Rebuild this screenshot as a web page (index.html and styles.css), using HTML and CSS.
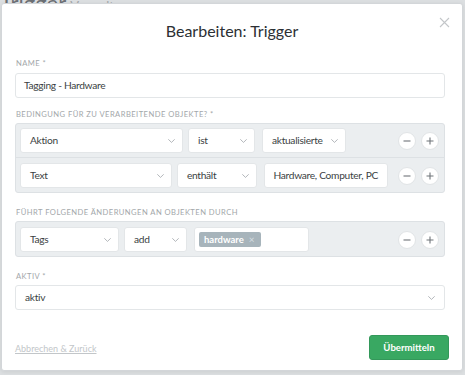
FILE: index.html
```html
<!DOCTYPE html>
<html lang="de">
<head>
<meta charset="utf-8">
<link rel="stylesheet" href="styles.css">
</head>
<body>
<div class="page-bg">
  <span class="page-title">Trigger</span> <span class="page-sub">Verwaltung</span>
</div>
<div class="modal">
  <div class="modal-head">
    <h1 class="modal-title">Bearbeiten: Trigger</h1>
    <span class="close">
      <svg width="11" height="11" viewBox="0 0 11 11"><path d="M1 1L10 10M10 1L1 10" stroke="#c3c6c9" stroke-width="1.1" fill="none"/></svg>
    </span>
  </div>
  <div class="modal-body">
    <div class="group g-name">
      <div class="label">Name *</div>
      <div class="control input">Tagging - Hardware</div>
    </div>
    <div class="group g-cond">
      <div class="label">Bedingung für zu verarbeitende Objekte? *</div>
      <div class="box">
        <div class="row">
          <div class="control select w-aktion">Aktion<svg class="chev" viewBox="0 0 7 4"><path d="M0.3 0.3L3.5 3.4L6.7 0.3"/></svg></div>
          <div class="control select w-ist">ist<svg class="chev" viewBox="0 0 7 4"><path d="M0.3 0.3L3.5 3.4L6.7 0.3"/></svg></div>
          <div class="control select w-akt">aktualisierte<svg class="chev" viewBox="0 0 7 4"><path d="M0.3 0.3L3.5 3.4L6.7 0.3"/></svg></div>
          <div class="spacer"></div>
          <span class="circ"><svg viewBox="0 0 8 8"><path d="M0.5 4H7.5"/></svg></span>
          <span class="circ"><svg viewBox="0 0 8 8"><path d="M0.5 4H7.5M4 0.5V7.5"/></svg></span>
        </div>
        <div class="row">
          <div class="control select w-text">Text<svg class="chev" viewBox="0 0 7 4"><path d="M0.3 0.3L3.5 3.4L6.7 0.3"/></svg></div>
          <div class="control select w-enth">enthält<svg class="chev" viewBox="0 0 7 4"><path d="M0.3 0.3L3.5 3.4L6.7 0.3"/></svg></div>
          <div class="control input w-hw">Hardware, Computer, PC</div>
          <div class="spacer"></div>
          <span class="circ"><svg viewBox="0 0 8 8"><path d="M0.5 4H7.5"/></svg></span>
          <span class="circ"><svg viewBox="0 0 8 8"><path d="M0.5 4H7.5M4 0.5V7.5"/></svg></span>
        </div>
      </div>
    </div>
    <div class="group g-act">
      <div class="label">Führt folgende Änderungen an Objekten durch</div>
      <div class="box">
        <div class="row row-act">
          <div class="control select w-tags">Tags<svg class="chev" viewBox="0 0 7 4"><path d="M0.3 0.3L3.5 3.4L6.7 0.3"/></svg></div>
          <div class="control select w-add">add<svg class="chev" viewBox="0 0 7 4"><path d="M0.3 0.3L3.5 3.4L6.7 0.3"/></svg></div>
          <div class="control tokens"><span class="token">hardware<span class="tx">×</span></span></div>
          <div class="spacer"></div>
          <span class="circ"><svg viewBox="0 0 8 8"><path d="M0.5 4H7.5"/></svg></span>
          <span class="circ"><svg viewBox="0 0 8 8"><path d="M0.5 4H7.5M4 0.5V7.5"/></svg></span>
        </div>
      </div>
    </div>
    <div class="group g-aktiv">
      <div class="label">Aktiv *</div>
      <div class="control select sel-aktiv">aktiv<svg class="chev" viewBox="0 0 7 4"><path d="M0.3 0.3L3.5 3.4L6.7 0.3"/></svg></div>
    </div>
  </div>
  <div class="modal-foot">
    <a class="cancel" href="#">Abbrechen &amp; Zurück</a>
    <button class="submit">Übermitteln</button>
  </div>
</div>
</body>
</html>
```

FILE: styles.css
```css
* { box-sizing: border-box; }
html, body { margin: 0; padding: 0; }
body {
  width: 465px;
  height: 375px;
  overflow: hidden;
  background: #dcdfe1;
  font-family: "Lato", "Open Sans", sans-serif;
  color: #3f4347;
  position: relative;
}
.page-bg {
  height: 4px;
  overflow: hidden;
  line-height: 10px;
  white-space: nowrap;
}
.page-title {
  display: inline-block;
  font-size: 22px;
  color: #6c7075;
  margin-top: -16px;
}
.page-sub {
  display: inline-block;
  font-size: 13px;
  color: #a4a8ab;
}
.modal {
  position: absolute;
  left: 1px;
  top: 3px;
  width: 462px;
  height: 368px;
  background: #fff;
  border: 1px solid #d3d6d9;
  border-radius: 3px;
  box-shadow: 0 1px 4px rgba(0,0,0,0.08);
}
.modal-head {
  position: relative;
  padding-top: 16px;
  text-align: center;
}
.modal-title {
  margin: 0;
  font-size: 16px;
  line-height: 22px;
  font-weight: 400;
  color: #2c3034;
}
.close {
  position: absolute;
  right: 12px;
  top: 13px;
  display: block;
  line-height: 0;
}
.modal-body {
  padding: 15px 17px 0 13px;
}
.g-name { margin-bottom: 10px; }
.g-cond { margin-bottom: 13px; }
.g-act { margin-bottom: 13px; }
.label {
  font-size: 7.6px;
  line-height: 12px;
  text-transform: uppercase;
  letter-spacing: 0.45px;
  color: #a3a7aa;
  margin-bottom: 3px;
  padding-left: 1px;
}
.g-name .label { margin-bottom: 4px; }
.control {
  position: relative;
  height: 25px;
  background: #fff;
  border: 1px solid #e3e6e8;
  border-radius: 3px;
  font-size: 10.2px;
  letter-spacing: -0.3px;
  line-height: 23px;
  color: #3b3f43;
  padding: 0 9px;
  white-space: nowrap;
}
.input { padding-left: 8px; }
.chev {
  position: absolute;
  right: 7px;
  top: 10px;
  width: 7px;
  height: 4px;
  fill: none;
  stroke: #a0a5a9;
  stroke-width: 0.8;
}
.sel-aktiv .chev { right: 9px; }
.box {
  background: #ebeef0;
  border: 1px solid #dde1e4;
  border-radius: 3px;
}
.row {
  display: flex;
  align-items: center;
  gap: 5px;
  padding: 4px 5px 4px 4px;
}
.row + .row {
  border-top: 1px solid #dde1e4;
  padding-top: 5px;
}
.row-act { padding-top: 5px; }
.spacer { flex: 1; }
.w-aktion { width: 163px; }
.w-ist { width: 67px; }
.w-akt { width: 84px; padding-right: 18px; margin-left: 2px; }
.w-text { width: 153px; }
.w-enth { width: 81px; }
.w-hw { width: 124px; margin-left: 2px; }
.w-tags { width: 99px; }
.w-add { width: 63px; }
.tokens { width: 115px; margin-left: 2px; padding: 0 4px; display: flex; align-items: center; }
.token {
  display: inline-flex;
  align-items: center;
  height: 15px;
  line-height: 15px;
  padding: 0 0 0 5px;
  background: #a7b4bb;
  color: #fff;
  border-radius: 2px;
  font-size: 9.5px;
  font-weight: 700;
  letter-spacing: 0;
  width: 62px;
}
.tx { font-weight: 400; color: #d5dde1; margin-left: 5px; font-size: 10px; }
.circ {
  display: flex;
  align-items: center;
  justify-content: center;
  width: 18px;
  height: 18px;
  border-radius: 50%;
  background: #fff;
  border: 1px solid #e1e4e6;
  flex: none;
}
.circ svg {
  width: 8px;
  height: 8px;
  fill: none;
  stroke: #6f7479;
  stroke-width: 1.1;
}
.modal-foot {
  display: flex;
  justify-content: space-between;
  align-items: center;
  padding: 25px 13px 0 13px;
}
.cancel {
  font-size: 9px;
  color: #c2c6c9;
  text-decoration: underline;
  margin-top: 1px;
}
.submit {
  width: 80px;
  height: 25px;
  background: #39a862;
  border: 1px solid #33985a;
  border-radius: 3px;
  color: #fff;
  font-family: inherit;
  font-size: 9.6px;
  font-weight: 700;
  padding: 0;
}
```
